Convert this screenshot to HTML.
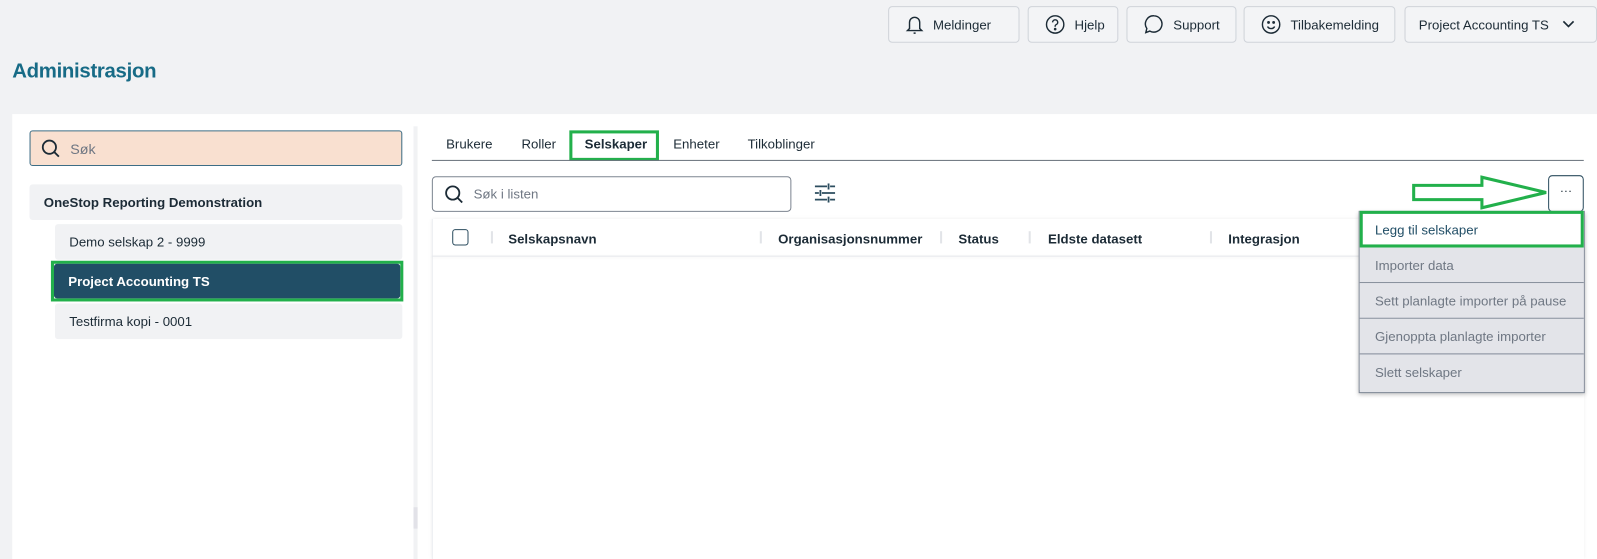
<!DOCTYPE html>
<html><head><meta charset="utf-8"><style>
*{box-sizing:border-box;margin:0;padding:0}
html,body{width:1597px;height:549px;overflow:hidden;background:#f1f2f4}
#w{position:absolute;left:0;top:0;width:1568px;height:539px;transform:scale(1.0185);transform-origin:0 0;font-family:"Liberation Sans",sans-serif;color:#1c2b36;font-size:13px}
.a{position:absolute}
.tb{position:absolute;top:6px;height:36px;border:1px solid #cfd3d9;border-radius:4px;background:#f3f4f6;display:flex;align-items:center;padding-left:16px;font-size:13px;color:#1c2b36}
.tb svg{margin-right:9px}
.panel{position:absolute;left:12px;top:112px;width:1556px;height:437px;background:#fff}
.item{position:absolute;display:flex;align-items:center;font-size:13px;border-radius:3px}
.tab{position:absolute;top:134px;font-size:13px;color:#1c2b36}
.th{position:absolute;top:227px;font-size:13px;font-weight:bold;color:#1c2b36}
.dv{position:absolute;top:227px;width:2px;height:12px;background:#e2e4e8}
.mi{position:absolute;left:1335px;width:220px;height:35px;display:flex;align-items:center;padding-left:15px;font-size:13px;color:#6f7783;background:#e3e4e9;border-bottom:1px solid #7d8694}
</style></head><body><div id="w">
<div class="tb" style="left:872px;width:129px"><svg width="18" height="20" viewBox="0 0 18 20" fill="none" stroke="#1c2b36" stroke-width="1.4"><path d="M4 14V8a5 5 0 0 1 10 0v6l2 2H2z"/><path d="M8 18.5h2"/></svg>Meldinger</div>
<div class="tb" style="left:1009px;width:89px"><svg width="20" height="20" viewBox="0 0 20 20" fill="none" stroke="#1c2b36" stroke-width="1.4"><circle cx="10" cy="10" r="8.5"/><path d="M7.5 8a2.5 2.5 0 1 1 3.3 2.3c-.6.3-.8.7-.8 1.4v.6"/><circle cx="10" cy="14.6" r=".6" fill="#1c2b36"/></svg>Hjelp</div>
<div class="tb" style="left:1106px;width:108px"><svg width="20" height="20" viewBox="0 0 20 20" fill="none" stroke="#1c2b36" stroke-width="1.4"><path d="M10 1.5a8 8 0 1 1-4 15L2 18l1-4A8 8 0 0 1 10 1.5z"/></svg>Support</div>
<div class="tb" style="left:1221px;width:149px"><svg width="20" height="20" viewBox="0 0 20 20" fill="none" stroke="#1c2b36" stroke-width="1.4"><circle cx="10" cy="10" r="8.5"/><path d="M6.5 12a4 4 0 0 0 7 0"/><circle cx="7.5" cy="8" r=".7" fill="#1c2b36"/><circle cx="12.5" cy="8" r=".7" fill="#1c2b36"/></svg>Tilbakemelding</div>
<div class="tb" style="left:1379px;width:189px;padding-left:13px">Project Accounting TS<svg style="margin-left:12px" width="14" height="10" viewBox="0 0 14 10" fill="none" stroke="#1c2b36" stroke-width="1.6"><path d="M2 2l5 5 5-5"/></svg></div>
<div class="a" style="left:12px;top:59px;font-size:20px;font-weight:bold;color:#176b86;letter-spacing:-0.3px">Administrasjon</div>
<div class="panel"></div>
<div class="a" style="left:406px;top:124px;width:4px;height:425px;background:#f1f2f4"></div>
<div class="a" style="left:406px;top:498px;width:4px;height:21px;background:#e2e2e8"></div>
<div class="item" style="left:29px;top:128px;width:366px;height:35px;background:#f9e0d0;border:1px solid #3d6d85;padding-left:10px;color:#6f7783;font-size:14px"><svg style="margin-right:9px" width="20" height="20" viewBox="0 0 20 20" fill="none" stroke="#1c2b36" stroke-width="1.8"><circle cx="8.5" cy="8.5" r="6.5"/><path d="M13.3 13.3l4.5 4.5"/></svg>Søk</div>
<div class="item" style="left:29px;top:181px;width:366px;height:35px;background:#f1f2f4;padding-left:14px;font-weight:bold">OneStop Reporting Demonstration</div>
<div class="item" style="left:54px;top:220px;width:341px;height:35px;background:#f1f2f4;padding-left:14px">Demo selskap 2 - 9999</div>
<div class="item" style="left:50px;top:256px;width:346px;height:40px;border:3px solid #22b04b;border-radius:0"></div>
<div class="item" style="left:53px;top:259px;width:340px;height:34px;background:#214e66;color:#fff;padding-left:14px;font-weight:bold">Project Accounting TS</div>
<div class="item" style="left:54px;top:298px;width:341px;height:35px;background:#f1f2f4;padding-left:14px">Testfirma kopi - 0001</div>
<div class="tab" style="left:438px">Brukere</div>
<div class="tab" style="left:512px">Roller</div>
<div class="a" style="left:559px;top:128px;width:88px;height:30px;border:3px solid #22b04b"></div>
<div class="tab" style="left:574px;font-weight:bold">Selskaper</div>
<div class="tab" style="left:661px">Enheter</div>
<div class="tab" style="left:734px">Tilkoblinger</div>
<div class="a" style="left:424px;top:157px;width:1131px;height:1px;background:#6a737d"></div>
<div class="item" style="left:424px;top:173px;width:353px;height:35px;border:1px solid #7d8590;border-radius:4px;padding-left:11px;color:#6f7783;font-size:13px"><svg style="margin-right:9px" width="20" height="20" viewBox="0 0 20 20" fill="none" stroke="#1c2b36" stroke-width="1.8"><circle cx="8.5" cy="8.5" r="6.5"/><path d="M13.3 13.3l4.5 4.5"/></svg>Søk i listen</div>
<svg class="a" style="left:800px;top:180px" width="20" height="19" viewBox="0 0 20 19" fill="none" stroke="#2c4d5f" stroke-width="1.8"><path d="M0 3h12M15 3h5M13.5 0v6M0 9.5h4M7 9.5h13M5.5 6.5v6M0 16h12M15 16h5M13.5 13v6"/></svg>
<div class="a" style="left:424px;top:215px;width:1131px;height:334px;border-left:1px solid #eceef1;box-shadow:0 0 4px rgba(0,0,0,.08)"></div>
<div class="a" style="left:424px;top:251px;width:1131px;height:1px;background:#e6e8ec;box-shadow:0 1px 3px rgba(0,0,0,.08)"></div>
<div class="a" style="left:444px;top:225px;width:16px;height:16px;border:1.5px solid #2c4d5f;border-radius:3px"></div>
<div class="dv" style="left:482px"></div><div class="th" style="left:499px">Selskapsnavn</div>
<div class="dv" style="left:746px"></div><div class="th" style="left:764px">Organisasjonsnummer</div>
<div class="dv" style="left:923px"></div><div class="th" style="left:941px">Status</div>
<div class="dv" style="left:1010px"></div><div class="th" style="left:1029px">Eldste datasett</div>
<div class="dv" style="left:1188px"></div><div class="th" style="left:1206px">Integrasjon</div>
<svg class="a" style="left:1386px;top:172px" width="136" height="34" viewBox="0 0 136 34"><path d="M2 10H69V2L132 17L69 32V24H2Z" fill="none" stroke="#22b04b" stroke-width="3"/></svg>
<div class="a" style="left:1520px;top:172px;width:35px;height:36px;border:1px solid #2c4d5f;border-radius:4px;background:#fff;text-align:center;font-size:12px;line-height:28px">···</div>
<div class="a" style="left:1334px;top:207px;width:222px;height:179px;box-shadow:0 2px 4px rgba(0,0,0,.25);background:#e3e4e9;border:1px solid #7d8694"></div>
<div class="mi" style="top:243px">Importer data</div>
<div class="mi" style="top:278px">Sett planlagte importer på pause</div>
<div class="mi" style="top:313px">Gjenoppta planlagte importer</div>
<div class="mi" style="top:348px;border-bottom:none">Slett selskaper</div>
<div class="mi" style="top:207px;height:36px;background:#fff;border:3px solid #22b04b;color:#214e66;padding-left:12px">Legg til selskaper</div>
</div></body></html>
